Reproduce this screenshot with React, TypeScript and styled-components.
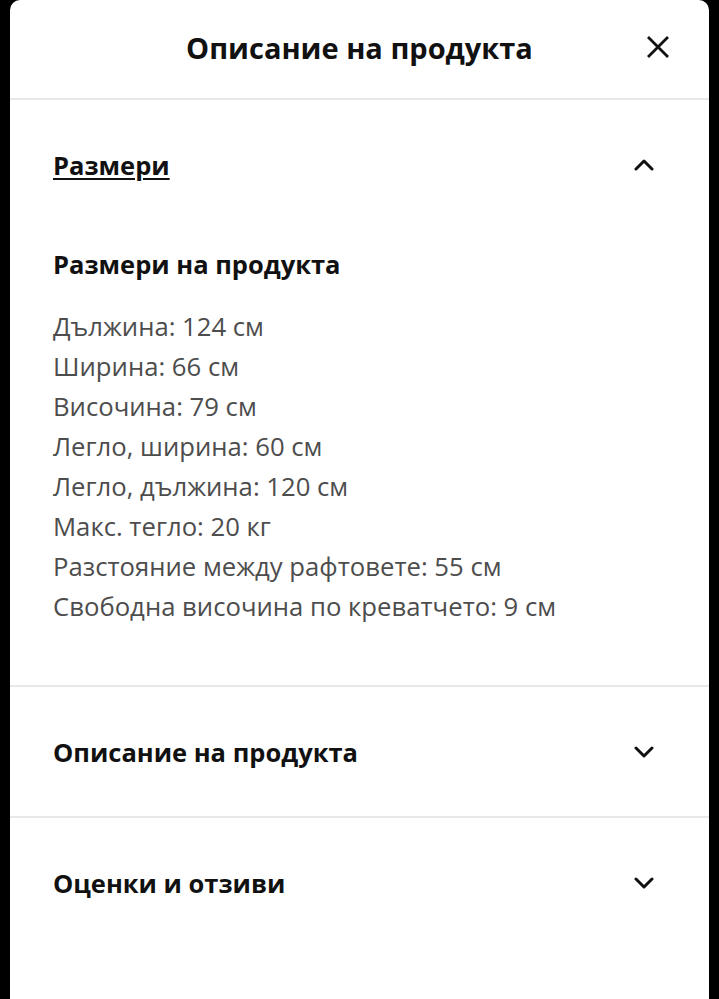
import styled, { createGlobalStyle } from "styled-components";

const Global = createGlobalStyle`
  html, body {
    margin: 0;
    padding: 0;
    background: #000;
  }
  body {
    font-family: "Open Sans", "Noto Sans", sans-serif;
  }
`;

const Panel = styled.div`
  margin: 0 10px;
  min-height: 100vh;
  background: #fff;
  border-radius: 10px 10px 0 0;
  color: #111;
`;

const Header = styled.header`
  height: 100px;
  display: flex;
  align-items: center;
  justify-content: center;
  position: relative;
  border-bottom: 2px solid #e8e8e8;
  padding-bottom: 4px;
  box-sizing: border-box;
`;

const Title = styled.h1`
  margin: 0;
  font-size: 29px;
  font-weight: 700;
`;

const CloseButton = styled.button`
  position: absolute;
  right: 37px;
  top: 33px;
  width: 28px;
  height: 28px;
  padding: 0;
  border: 0;
  background: none;
  display: flex;
  align-items: center;
  justify-content: center;
`;

const Section = styled.section<{ $last?: boolean }>`
  border-bottom: ${(p) => (p.$last ? "none" : "2px solid #e8e8e8")};
`;

const SectionHead = styled.div`
  height: 129px;
  display: flex;
  align-items: center;
  justify-content: space-between;
  padding: 0 55px 0 43px;
`;

const SectionTitle = styled.span<{ $open?: boolean }>`
  font-size: 25.5px;
  font-weight: 700;
  text-decoration: ${(p) => (p.$open ? "underline" : "none")};
  text-underline-offset: 3px;
  text-decoration-thickness: 2px;
`;

const Body = styled.div`
  padding: 18px 43px 58px;
`;

const SubTitle = styled.h3`
  margin: 0 0 26px;
  font-size: 25.5px;
  font-weight: 700;
  line-height: 34px;
`;

const Line = styled.div`
  font-size: 25.7px;
  line-height: 40px;
  color: #4d4d4d;
`;

const Chevron = ({ up }: { up?: boolean }) => (
  <svg width="20" height="12" viewBox="0 0 20 12" fill="none">
    <path
      d={up ? "M2 10L10 2L18 10" : "M2 2L10 10L18 2"}
      stroke="#111"
      strokeWidth="3"
      strokeLinecap="round"
      strokeLinejoin="round"
    />
  </svg>
);

const dims = [
  "Дължина: 124 см",
  "Ширина: 66 см",
  "Височина: 79 см",
  "Легло, ширина: 60 см",
  "Легло, дължина: 120 см",
  "Макс. тегло: 20 кг",
  "Разстояние между рафтовете: 55 см",
  "Свободна височина по креватчето: 9 см",
];

export default function App() {
  return (
    <>
      <Global />
      <Panel>
        <Header>
          <Title>Описание на продукта</Title>
          <CloseButton aria-label="close">
            <svg width="24" height="24" viewBox="0 0 24 24" fill="none">
              <path d="M2 2L22 22M22 2L2 22" stroke="#111" strokeWidth="2.8" />
            </svg>
          </CloseButton>
        </Header>
        <Section>
          <SectionHead>
            <SectionTitle $open>Размери</SectionTitle>
            <Chevron up />
          </SectionHead>
          <Body>
            <SubTitle>Размери на продукта</SubTitle>
            {dims.map((d) => (
              <Line key={d}>{d}</Line>
            ))}
          </Body>
        </Section>
        <Section>
          <SectionHead>
            <SectionTitle>Описание на продукта</SectionTitle>
            <Chevron />
          </SectionHead>
        </Section>
        <Section $last>
          <SectionHead>
            <SectionTitle>Оценки и отзиви</SectionTitle>
            <Chevron />
          </SectionHead>
        </Section>
      </Panel>
    </>
  );
}
